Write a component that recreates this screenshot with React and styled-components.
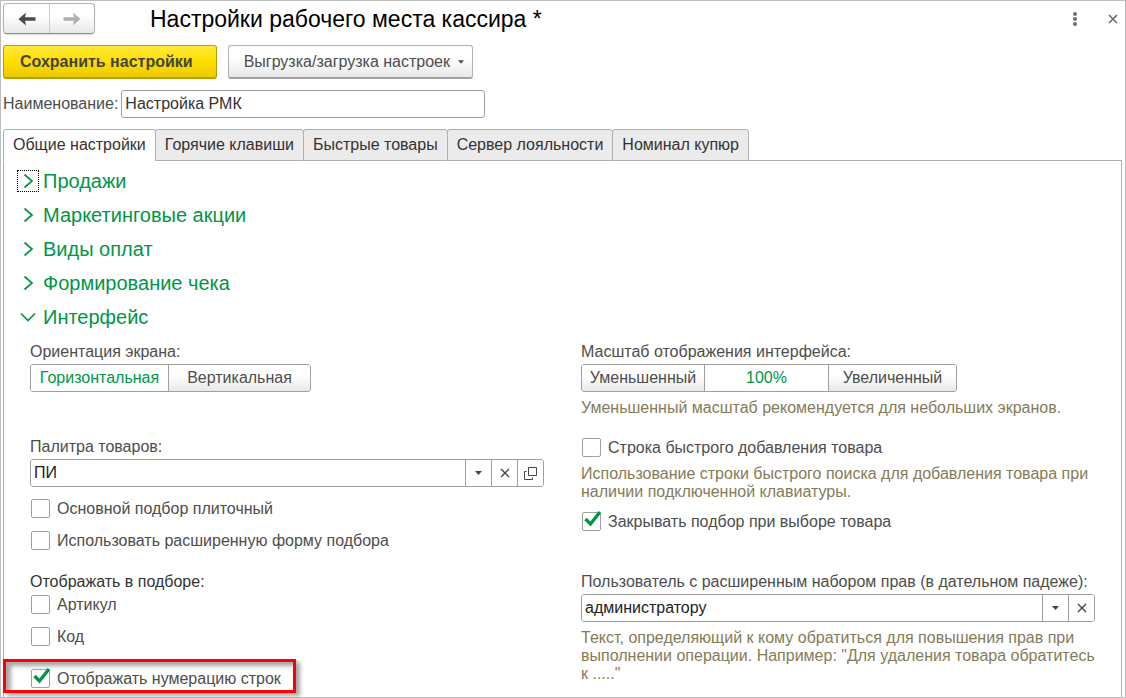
import React, { useState } from 'react';
import styled, { createGlobalStyle, css } from 'styled-components';

const GlobalStyle = createGlobalStyle`
  * {
    box-sizing: border-box;
  }

  body {
    margin: 0;
    background: #fff;
  }

  body, button, input {
    font-family: 'Liberation Sans', Arial, sans-serif;
    font-size: 16px;
    color: #4d4d4d;
  }
`;

const raised = css`
  background: linear-gradient(#fff 40%, #e8e8e8);
`;

const Window = styled.main`
  min-height: 100vh;
  padding: 2px 3px 0 2px;
  border: 1px solid #bdbdbd;
  display: flex;
  flex-direction: column;
  gap: 11px;
`;

const Header = styled.header`
  display: flex;
  align-items: center;
`;

const NavGroup = styled.div`
  display: flex;
  height: 31px;
  border: 1px solid #b0b0b0;
  border-bottom-color: #8f8f8f;
  border-radius: 4px;
  box-shadow: 0 1px 1px #ddd;
  ${raised}
`;

const NavButton = styled.button`
  width: 45px;
  padding: 0;
  border: none;
  background: none;
  display: flex;
  align-items: center;
  justify-content: center;
  color: #4a4a4a;

  & + & {
    border-left: 1px solid #ccc;
  }

  &:disabled {
    color: #b0b0b0;
  }
`;

const Title = styled.h1`
  flex: 1;
  margin: 0 0 0 55px;
  font-size: 23px;
  line-height: 28px;
  font-weight: 400;
  color: #000;
`;

const WindowActions = styled.div`
  display: flex;
  gap: 20px;
`;

const IconButton = styled.button`
  width: 18px;
  height: 24px;
  padding: 0;
  border: none;
  background: none;
  display: flex;
  align-items: center;
  justify-content: center;
  color: #6e6e6e;
`;

const Toolbar = styled.div`
  display: flex;
  gap: 11px;
`;

const ToolButton = styled.button`
  height: 34px;
  padding: 0 8px 0 15px;
  border: 1px solid #b0b0b0;
  border-bottom: 2px solid #a0a0a0;
  border-radius: 3px;
  display: flex;
  align-items: center;
  gap: 8px;
  ${raised}

  ${({ $primary }) => $primary && css`
    padding: 0 23px 0 16px;
    border-color: #b5a000;
    background: linear-gradient(#ffea3d, #ffe000 45%, #ecca00);
    font-weight: 700;
    color: #444;
  `}
`;

const NameRow = styled.div`
  display: flex;
  align-items: center;
  gap: 3px;
`;

const NameInput = styled.input`
  width: 364px;
  height: 28px;
  padding: 0 3px;
  border: 1px solid #a0a0a0;
  border-radius: 3px;
  color: #333;
`;

const Tabbed = styled.div`
  flex: 1;
  display: flex;
  flex-direction: column;
`;

const TabBar = styled.div`
  display: flex;
  margin-bottom: -1px;
  position: relative;
`;

const Tab = styled.button`
  height: 32px;
  padding: 0 9px;
  border: 1px solid #b0b0b0;
  border-bottom-color: ${({ $active }) => ($active ? '#fff' : '#b0b0b0')};
  border-radius: 3px 3px 0 0;
  background: ${({ $active }) => ($active ? '#fff' : '#ebebeb')};
  color: #333;

  & + & {
    margin-left: -1px;
  }
`;

const Panel = styled.section`
  flex: 1;
  padding: 3px 13px 0;
  border: 1px solid #b0b0b0;
  border-bottom: none;
`;

const SectionHeading = styled.h2`
  margin: 0;
  font-size: 20px;
  font-weight: 400;
`;

const SectionToggle = styled.button`
  height: 34px;
  padding: 0;
  border: none;
  background: none;
  display: flex;
  align-items: center;
  gap: 4px;
  font-size: 20px;
  color: #009646;
`;

const ToggleIcon = styled.span`
  width: 22px;
  height: 22px;
  border: 1px dotted ${({ $focused }) => ($focused ? '#000' : 'transparent')};
  display: flex;
  align-items: center;
  justify-content: center;
`;

const Settings = styled.div`
  display: grid;
  grid-template-columns: 1fr 1fr;
  gap: 20px 37px;
  padding: 8px 13px 0;
  line-height: 18px;
`;

const Cell = styled.div`
  display: flex;
  flex-direction: column;
  align-items: flex-start;
`;

const Caption = styled.label`
  padding-top: 1px;
  margin-bottom: 3px;
  color: ${({ $dark }) => ($dark ? '#333' : '#4d4d4d')};
`;

const Segments = styled.div`
  display: flex;
  height: 28px;
  border: 1px solid #a0a0a0;
  border-radius: 3px;
  overflow: hidden;
`;

const Segment = styled.label`
  min-width: ${({ $width }) => $width}px;
  display: flex;
  align-items: center;
  justify-content: center;
  ${raised}

  & + & {
    border-left: 1px solid #a0a0a0;
  }

  &:has(input:checked) {
    background: #fff;
    color: #009646;
  }

  input {
    appearance: none;
    width: 0;
    margin: 0;
  }
`;

const Hint = styled.p`
  margin: ${({ $tight }) => ($tight ? '6px 0 10px' : '7px 0 0')};
  color: #857b58;
`;

const Combo = styled.div`
  width: 100%;
  height: 28px;
  border: 1px solid #a0a0a0;
  border-radius: 3px;
  display: flex;
  overflow: hidden;
`;

const ComboInput = styled.input`
  flex: 1;
  min-width: 0;
  padding: 0 3px;
  border: none;
  color: #222;
`;

const ComboButton = styled.button`
  width: 26px;
  padding: 0;
  border: none;
  border-left: 1px solid #a0a0a0;
  background: #fff;
  display: flex;
  align-items: center;
  justify-content: center;
  color: #444;
`;

const CheckList = styled.div`
  display: flex;
  flex-direction: column;
  align-items: flex-start;
  gap: 10px;
  margin-top: ${({ $top }) => $top || 0}px;
`;

const CheckLabel = styled.label`
  height: 22px;
  padding: 0 0 1px 1px;
  display: flex;
  align-items: center;
  gap: 7px;
`;

const CheckBox = styled.span`
  position: relative;
  width: 19px;
  height: 19px;

  input {
    appearance: none;
    display: block;
    width: 19px;
    height: 19px;
    margin: 0;
    border: 1px solid #a0a0a0;
    border-radius: 2px;
    background: #fff;
  }

  svg {
    position: absolute;
    left: 2px;
    top: -2px;
    pointer-events: none;
  }
`;

// Red frame drawn over the page around the option
const Highlighted = styled.div`
  position: relative;
  margin-top: 20px;

  &::before {
    content: '';
    position: absolute;
    inset: -9px -15px -3px -27px;
    border: 3px solid #fb0007;
    box-shadow: 4px 3px 4px rgba(0, 0, 0, 0.35), inset 5px 4px 4px rgba(0, 0, 0, 0.35);
    pointer-events: none;
  }
`;

function Arrow({ flip }) {
  return (
    <svg width="18" height="14" viewBox="0 0 18 14" fill="currentColor">
      <path transform={flip ? 'matrix(-1 0 0 1 18 0)' : undefined} d="M0.5 7 L8 0.5 L7 5.2 H17.5 V8.8 H7 L8 13.5 Z" />
    </svg>
  );
}

function Cross({ size = 10, width = 1.4 }) {
  return (
    <svg width={size} height={size} viewBox="0 0 10 10" fill="none" stroke="currentColor" strokeWidth={width}>
      <path d="M1 1 L9 9 M9 1 L1 9" />
    </svg>
  );
}

function Caret({ small }) {
  return (
    <svg width={small ? 6 : 7} height="4" viewBox="0 0 7 4" fill="currentColor">
      <path d="M0 0 H7 L3.5 4 Z" />
    </svg>
  );
}

function Chevron({ open }) {
  return (
    <svg width="16" height="16" viewBox="0 0 16 16" fill="none" stroke="currentColor" strokeWidth="1.7">
      <path d={open ? 'M1 4.5 L8 11.5 L15 4.5' : 'M4.5 1.5 L12 8 L4.5 14.5'} />
    </svg>
  );
}

function Check({ label, defaultChecked = false }) {
  const [checked, setChecked] = useState(defaultChecked);
  return (
    <CheckLabel>
      <CheckBox>
        <input type="checkbox" checked={checked} onChange={() => setChecked(!checked)} />
        {checked && (
          <svg width="18" height="18" viewBox="0 0 18 18" fill="none" stroke="#009646" strokeWidth="3.4">
            <path d="M1.5 9 L6.5 14 L16 2" />
          </svg>
        )}
      </CheckBox>
      {label}
    </CheckLabel>
  );
}

function Switcher({ name, label, options, initial }) {
  const [value, setValue] = useState(initial);
  return (
    <Segments role="radiogroup" aria-label={label}>
      {options.map(([text, width]) => (
        <Segment key={text} $width={width}>
          <input type="radio" name={name} checked={value === text} onChange={() => setValue(text)} />
          {text}
        </Segment>
      ))}
    </Segments>
  );
}

function ComboField({ id, initial, withOpen }) {
  const [value, setValue] = useState(initial);
  return (
    <Combo>
      <ComboInput id={id} type="text" value={value} onChange={(e) => setValue(e.target.value)} />
      <ComboButton type="button" aria-label="Выбрать"><Caret /></ComboButton>
      <ComboButton type="button" aria-label="Очистить" onClick={() => setValue('')}><Cross /></ComboButton>
      {withOpen && (
        <ComboButton type="button" aria-label="Открыть">
          <svg width="13" height="13" viewBox="0 0 13 13" fill="none" stroke="currentColor">
            <path d="M4.5 0.5 H12.5 V8.5 H4.5 Z M2.5 4.5 H0.5 V12.5 H8.5 V10.5" />
          </svg>
        </ComboButton>
      )}
    </Combo>
  );
}

const tabs = ['Общие настройки', 'Горячие клавиши', 'Быстрые товары', 'Сервер лояльности', 'Номинал купюр'];
const sections = ['Продажи', 'Маркетинговые акции', 'Виды оплат', 'Формирование чека', 'Интерфейс'];

function App() {
  const [tab, setTab] = useState(0);
  const [open, setOpen] = useState(true);

  return (
    <>
      <GlobalStyle />
      <Window>
        <Header>
          <NavGroup>
            <NavButton type="button" aria-label="Назад"><Arrow /></NavButton>
            <NavButton type="button" aria-label="Вперед" disabled><Arrow flip /></NavButton>
          </NavGroup>
          <Title>Настройки рабочего места кассира *</Title>
          <WindowActions>
            <IconButton type="button" aria-label="Меню">
              <svg width="4" height="14" viewBox="0 0 4 14" fill="currentColor">
                <circle cx="2" cy="2" r="2" />
                <circle cx="2" cy="7" r="2" />
                <circle cx="2" cy="12" r="2" />
              </svg>
            </IconButton>
            <IconButton type="button" aria-label="Закрыть"><Cross width={1.7} /></IconButton>
          </WindowActions>
        </Header>

        <Toolbar>
          <ToolButton type="button" $primary>Сохранить настройки</ToolButton>
          <ToolButton type="button">Выгрузка/загрузка настроек <Caret small /></ToolButton>
        </Toolbar>

        <NameRow>
          <label htmlFor="name">Наименование:</label>
          <NameInput id="name" type="text" defaultValue="Настройка РМК" />
        </NameRow>

        <Tabbed>
          <TabBar role="tablist">
            {tabs.map((text, i) => (
              <Tab key={text} type="button" role="tab" aria-selected={i === tab} $active={i === tab} onClick={() => setTab(i)}>
                {text}
              </Tab>
            ))}
          </TabBar>
          <Panel role="tabpanel">
            {sections.map((text, i) => {
              const last = i === sections.length - 1;
              return (
                <SectionHeading key={text}>
                  <SectionToggle type="button" aria-expanded={last && open} onClick={() => last && setOpen(!open)}>
                    <ToggleIcon $focused={i === 0}><Chevron open={last && open} /></ToggleIcon>
                    {text}
                  </SectionToggle>
                </SectionHeading>
              );
            })}

            {open && (
              <Settings>
                <Cell>
                  <Caption as="span">Ориентация экрана:</Caption>
                  <Switcher
                    name="orientation"
                    label="Ориентация экрана"
                    initial="Горизонтальная"
                    options={[['Горизонтальная', 137], ['Вертикальная', 142]]}
                  />
                </Cell>
                <Cell>
                  <Caption as="span">Масштаб отображения интерфейса:</Caption>
                  <Switcher
                    name="scale"
                    label="Масштаб отображения интерфейса"
                    initial="100%"
                    options={[['Уменьшенный', 122], ['100%', 124], ['Увеличенный', 128]]}
                  />
                  <Hint>Уменьшенный масштаб рекомендуется для небольших экранов.</Hint>
                </Cell>

                <Cell>
                  <Caption htmlFor="palette">Палитра товаров:</Caption>
                  <ComboField id="palette" initial="ПИ" withOpen />
                  <CheckList $top={11}>
                    <Check label="Основной подбор плиточный" />
                    <Check label="Использовать расширенную форму подбора" />
                  </CheckList>
                </Cell>
                <Cell>
                  <Check label="Строка быстрого добавления товара" />
                  <Hint $tight>
                    Использование строки быстрого поиска для добавления товара при наличии подключенной клавиатуры.
                  </Hint>
                  <Check label="Закрывать подбор при выборе товара" defaultChecked />
                </Cell>

                <Cell>
                  <Caption as="span" $dark>Отображать в подборе:</Caption>
                  <CheckList>
                    <Check label="Артикул" />
                    <Check label="Код" />
                  </CheckList>
                  <Highlighted>
                    <Check label="Отображать нумерацию строк" defaultChecked />
                  </Highlighted>
                </Cell>
                <Cell>
                  <Caption htmlFor="user">Пользователь с расширенным набором прав (в дательном падеже):</Caption>
                  <ComboField id="user" initial="администратору" />
                  <Hint>
                    Текст, определяющий к кому обратиться для повышения прав при выполнении операции. Например: "Для
                    удаления товара обратитесь к ....."
                  </Hint>
                </Cell>
              </Settings>
            )}
          </Panel>
        </Tabbed>
      </Window>
    </>
  );
}

export default App;
